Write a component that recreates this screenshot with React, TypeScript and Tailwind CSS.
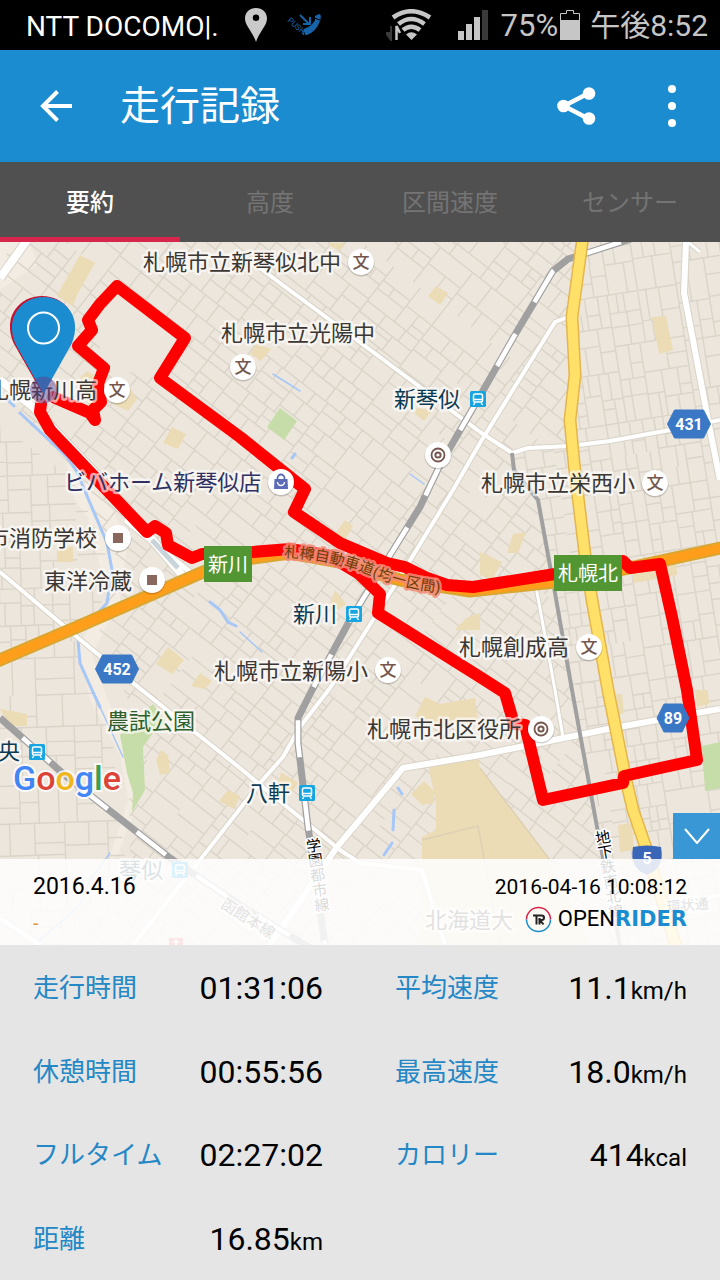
import React from "react";

const jp = "font-['Roboto','Noto_Sans_CJK_JP',sans-serif]";

type Pt = [number, number];

function rng(seed: number) {
  let s = seed;
  return () => {
    s = (s * 1664525 + 1013904223) % 4294967296;
    return s / 4294967296;
  };
}

/* Splits an area into city blocks and returns the streets between them. */
function blocks(seed: number, w: number, h: number, min: number, ratio: number): string {
  const rand = rng(seed);
  const out: string[] = [];
  const split = (x: number, y: number, bw: number, bh: number) => {
    const limit = min * (1 + rand() * 0.9);
    if (bw < limit * ratio && bh < limit) return;
    const t = 0.35 + rand() * 0.3;
    const draw = rand() > 0.07;
    if (bw / ratio > bh) {
      const m = Math.round(bw * t);
      if (draw) out.push(`M${x + m} ${y}v${bh}`);
      split(x, y, m, bh);
      split(x + m, y, bw - m, bh);
    } else {
      const m = Math.round(bh * t);
      if (draw) out.push(`M${x} ${y + m}h${bw}`);
      split(x, y, bw, m);
      split(x, y + m, bw, bh - m);
    }
  };
  split(0, 0, w, h);
  return out.join("");
}

const centreStreets = blocks(7, 1300, 1300, 16, 1.5);
const eastStreets = blocks(21, 420, 860, 21, 0.7);
const westStreets = blocks(5, 220, 560, 22, 1.1);

const sand = [
  "80,255 95,263 78,293 73,306 57,296 60,290",
  "87,371 98,377 100,400 88,405 80,378",
  "128,385 137,399 128,411 113,404",
  "172,427 186,434 178,449 163,443",
  "256,344 271,349 261,361 250,354",
  "330,243 345,243 341,250 329,246",
  "436,286 448,293 440,305 428,296",
  "417,408 432,410 424,421 415,414",
  "652,317 666,316 673,350 659,354",
  "57,547 73,547 73,562 57,562",
  "168,647 184,660 172,674 156,664",
  "200,673 212,681 205,689 191,686",
  "345,520 353,526 345,540 335,534",
  "335,590 346,604 338,610 330,604",
  "513,534 526,532 518,553 507,553",
  "480,552 502,562 492,580 480,575",
  "466,618 480,613 480,630 455,630",
  "0,709 27,714 27,726 10,726",
  "161,750 168,755 170,773 160,775 156,760",
  "228,790 240,796 234,809 219,801",
  "425,697 440,704 475,698 478,722 440,728 415,716",
  "281,772 298,783 292,792 277,786",
  "632,565 676,560 677,575 634,583",
  "695,690 708,690 709,704 697,707",
  "616,694 622,694 624,713 618,715",
  "618,825 632,823 634,850 620,852",
  "424,781 434,791 434,803 422,805 411,794",
  "428,764 478,757 480,768 550,860 590,945 422,945 422,837 436,830 436,803",
];

const whiteRoads: [string, number][] = [
  ["M30 236L0 278", 8],
  ["M260 268L280 283L330 320L357 340L420 387L480 432L512 453L528 448L570 446L610 441L670 430L720 420", 4],
  ["M700 252L688 242", 3],
  ["M568 317L555 322L480 443L453 490L400 577L330 688L300 727L283 757L260 783L200 860L133 945", 4],
  ["M686 242L684 293L693 340L710 430L720 480", 6],
  ["M0 380L33 407L100 478L182 575", 8],
  ["M125 520L190 572", 5],
  ["M0 572L77 637L133 683L240 768L270 793L340 850L360 863L422 870L445 945", 4],
  ["M270 945L337 847L403 768L480 755L613 728L720 709", 6],
  ["M536 587L555 690L563 737", 3],
  ["M0 918L40 945", 4],
  ["M640 910L720 895", 4],
];

const lightRail = "M640 236L587 253L568 259L553 271L516 333L480 396L440 465L420 507L387 560L350 620L312 690L298 718L298 743L308 827L313 860L325 945";
const southRail = "M0 718L67 777L170 858L240 905L310 948";
const subway = "M512 453L514 470L538 500L555 593L572 690L597 827L620 945";
const mainRoad = "M583 236L572 317L575 375L570 420L574 463L585 555L592 600L608 690L616 730L626 780L633 810L645 845L662 900L677 950";
const highway = "M-5 662L77 627L203 572L240 560L290 553L340 562L400 580L470 591L555 582L620 570L725 547";

const route = "M53 397L90 413L95 420L93 410L101 402L98 384L104 368L78 346L92 330L88 320L100 304L117 286L185 338L160 378L240 437L305 489L294 512L340 543L387 563L405 567L427 578L447 585L473 587L555 574L623 561L630 568L660 564L672 617L687 690L697 760L624 776L623 783L543 800L525 725L514 724L505 693L480 677L378 613L380 594L358 573L330 556L290 549L240 553L202 554L192 558L168 545L166 533L155 526L147 532L85 467L50 430L40 412L41 404";

function Label({ x, y, size = 22, fill = "#3a3734", weight = 400, children }: {
  x: number; y: number; size?: number; fill?: string; weight?: number; children: React.ReactNode;
}) {
  return (
    <text x={x} y={y} fontSize={size} fill={fill} fontWeight={weight} stroke="#fff" strokeOpacity={0.65}
      strokeWidth={5} strokeLinejoin="round" paintOrder="stroke">
      {children}
    </text>
  );
}

function Disc({ x, y, children }: { x: number; y: number; children: React.ReactNode }) {
  return (
    <g transform={`translate(${x} ${y})`}>
      <circle cy="1" r="13.5" fill="#000" opacity="0.18" />
      <circle r="13" fill="#fff" />
      {children}
    </g>
  );
}

const School = ({ x, y }: { x: number; y: number }) => (
  <Disc x={x} y={y}>
    <text y="6" fontSize="17" fontWeight="500" textAnchor="middle" fill="#76574e">文</text>
  </Disc>
);
const Office = ({ x, y }: { x: number; y: number }) => (
  <Disc x={x} y={y}>
    <circle r="6.5" fill="none" stroke="#76574e" strokeWidth="1.8" />
    <circle r="2.6" fill="none" stroke="#76574e" strokeWidth="2" />
  </Disc>
);
const Place = ({ x, y }: { x: number; y: number }) => (
  <Disc x={x} y={y}><rect x="-5" y="-5" width="10" height="10" fill="#8a675c" /></Disc>
);
const Station = ({ x, y }: { x: number; y: number }) => (
  <g transform={`translate(${x} ${y})`}>
    <rect x="-8" y="-8" width="16" height="16" rx="1.5" fill="#16a5e0" />
    <rect x="-4.5" y="-5" width="9" height="8" rx="1.5" fill="none" stroke="#fff" strokeWidth="1.5" />
    <path d="M-4 0.5H4M-3 3.5L-4.5 6M3 3.5L4.5 6" stroke="#fff" strokeWidth="1.4" />
  </g>
);
function Shield({ x, y, w, text }: { x: number; y: number; w: number; text: string }) {
  const a = w / 2;
  const pts: Pt[] = [[-a, 0], [-a + 7, -14], [a - 7, -14], [a, 0], [a - 7, 14], [-a + 7, 14]];
  return (
    <g transform={`translate(${x} ${y})`}>
      <polygon points={pts.map((p) => p.join(",")).join(" ")} fill="#3a78c6" stroke="#3a78c6" strokeLinejoin="round" />
      <text y="6" fontSize="16" fontWeight="700" textAnchor="middle" fill="#fff">{text}</text>
    </g>
  );
}
function ExitSign({ x, y, w, h, text }: { x: number; y: number; w: number; h: number; text: string }) {
  return (
    <g>
      <rect x={x} y={y} width={w} height={h} fill="#529634" />
      <text x={x + w / 2} y={y + h / 2 + 8} fontSize="20" textAnchor="middle" fill="#fff">{text}</text>
    </g>
  );
}

function RouteMap() {
  return (
    <svg viewBox="0 242 720 703" role="img" aria-label="走行ルートの地図" className={`block h-auto w-full ${jp}`}>
      <defs>
        <clipPath id="east"><path d="M580 242H720V945H620L597 827L555 593L538 500L512 453L570 446L570 315Z" /></clipPath>
        <clipPath id="west"><path d="M0 425L75 480L108 560L100 612L76 650L112 740L125 860L60 945H0Z" /></clipPath>
        <clipPath id="centre">
          <path d="M0 242H578L568 315L568 446L512 453L538 500L555 593L597 827L620 945H60L130 860L128 700L100 630L118 560L75 470L0 395Z" />
        </clipPath>
        <path id="expressway" d="M284 557Q330 559 370 575T448 593" />
      </defs>
      <rect y="242" width="720" height="703" fill="#ede6dc" />
      <path d="M30 242L37 265L0 290V242ZM66 462L75 500L88 518L108 600L78 645L90 700L120 755L128 800L112 850L95 870L118 855L138 800L130 760L108 700L92 655L120 600L128 540L110 505Z" fill="#f3ece2" />
      <g fill="none" stroke="#dad4c9" strokeWidth="1.4">
        <g clipPath="url(#centre)"><path transform="translate(330 -160) rotate(38)" d={centreStreets} /></g>
        <g clipPath="url(#east)"><path transform="translate(470 230) rotate(-9)" d={eastStreets} /></g>
        <g clipPath="url(#west)"><path transform="translate(-20 410) rotate(-2)" d={westStreets} /></g>
      </g>
      <path d="M94 322L120 292L185 338L158 378L104 366Z" fill="#ede6dc" />
      <g fill="#ebdcb6">{sand.map((p) => <polygon key={p} points={p} />)}</g>
      <path d="M422 840L478 826L500 945M480 768L550 860" fill="none" stroke="#ddd0b4" strokeWidth="1.5" />
      <path d="M153 704L140 716L120 735L127 773L133 793L132 812L145 790L143 747L153 733L166 724ZM280 408L297 421L284 440L267 427ZM702 746L720 742V788L705 791Z" fill="#c7dda9" />
      <g fill="none" stroke="#a6c7f7" strokeWidth="3" strokeLinecap="round">
        <path d="M8 400L14 406M20 413L67 457L77 472L90 503L107 543L112 570L107 603L98 613M78 640L80 663L92 690L100 707" />
        <path d="M100 707L123 757" strokeWidth="1.5" />
        <path d="M210 602L220 610L228 622L236 626M398 788L402 794M394 810L393 830M392 843L384 855M295 454L292 458" />
        <path d="M273 374L300 391M410 474L424 484M240 632L262 652M110 853L90 880L80 905L40 940" strokeWidth="1.5" />
      </g>
      <g fill="none" strokeLinejoin="round">
        {whiteRoads.map(([d, w]) => <path key={d} d={d} stroke="#d9d3c8" strokeWidth={w + 2} />)}
        {whiteRoads.map(([d, w]) => <path key={d} d={d} stroke="#fff" strokeWidth={w} />)}
        <path d="M152 540L178 568" stroke="#c9d3da" strokeWidth="5" />
        <path d={subway} stroke="#a0a0a0" strokeWidth="4" />
        <path d={southRail} stroke="#a0a0a0" strokeWidth="7" />
        <path d={southRail} stroke="#fff" strokeWidth="4.6" strokeDasharray="37 37" strokeDashoffset="-30" />
        <path d={lightRail} stroke="#a0a0a0" strokeWidth="7" />
        <path d={lightRail} stroke="#fff" strokeWidth="4.6" strokeDasharray="37 37" strokeDashoffset="-20" />
        <path d={highway} stroke="#d9a632" strokeWidth="13" />
        <path d={mainRoad} stroke="#e3b64e" strokeWidth="13" />
        <path d={mainRoad} stroke="#ffe069" strokeWidth="10" />
        <path d={highway} stroke="#ff9e1b" strokeWidth="9" />
        <path d={route} stroke="#ff0000" strokeWidth="12" strokeLinecap="round" />
      </g>

      <Label x={143} y={270}>札幌市立新琴似北中</Label>
      <Label x={221} y={341}>札幌市立光陽中</Label>
      <Label x={394} y={407} fill="#0c3b53">新琴似</Label>
      <Label x={64} y={490} fill="#2f3163">ビバホーム新琴似店</Label>
      <Label x={481} y={491}>札幌市立栄西小</Label>
      <Label x={-13} y={546}>市消防学校</Label>
      <Label x={44} y={589}>東洋冷蔵</Label>
      <Label x={293} y={622} fill="#0c3b53">新川</Label>
      <Label x={459} y={655}>札幌創成高</Label>
      <Label x={214} y={679}>札幌市立新陽小</Label>
      <Label x={107} y={729} fill="#2f5f2c">農試公園</Label>
      <Label x={367} y={737}>札幌市北区役所</Label>
      <Label x={-2} y={759} fill="#0c3b53">央</Label>
      <Label x={246} y={801} fill="#0c3b53">八軒</Label>
      <Label x={119} y={878} fill="#0c3b53">琴似</Label>
      <Label x={425} y={928}>北海道大</Label>
      <g transform="translate(223 902) rotate(32)"><Label x={0} y={6} size={15}>函館本線</Label></g>
      <g transform="translate(667 912) rotate(-5)"><Label x={0} y={0} size={14}>環状通</Label></g>
      <g transform="translate(311 838) rotate(-8)">
        <text className="[writing-mode:vertical-rl]" fontSize="15" fill="#000" stroke="#fff" strokeWidth="3" paintOrder="stroke">学園都市線</text>
      </g>
      <g transform="translate(600 830) rotate(-10)">
        <text className="[writing-mode:vertical-rl]" fontSize="15" fill="#000" stroke="#fff" strokeWidth="3" paintOrder="stroke">地下鉄南北線</text>
      </g>
      <text fontSize="15" fill="#6b3f08" stroke="#f58a78" strokeWidth="5" strokeOpacity="0.85" paintOrder="stroke" strokeLinejoin="round">
        <textPath href="#expressway">札樽自動車道(均一区間)</textPath>
      </text>

      <School x={361} y={262} /><School x={243} y={367} /><School x={117} y={390} />
      <School x={655} y={483} /><School x={589} y={647} /><School x={388} y={670} />
      <Office x={438} y={455} /><Office x={541} y={729} />
      <Place x={118} y={538} /><Place x={152} y={580} />
      <Disc x={281} y={482}>
        <path d="M-6.5 -3H6.5L7 7H-7Z" fill="#5c6bb8" />
        <path d="M-3.5 -3V-4A3.5 3.5 0 0 1 3.5 -4V-3" fill="none" stroke="#5c6bb8" strokeWidth="1.8" />
        <path d="M-3.5 0A3.5 3.5 0 0 0 3.5 0" fill="none" stroke="#fff" strokeWidth="1.4" />
      </Disc>
      <Station x={478} y={399} /><Station x={354} y={614} /><Station x={307} y={793} />
      <Station x={37} y={752} /><Station x={180} y={870} />
      <Shield x={689} y={424} w={43} text="431" />
      <Shield x={117} y={669} w={43} text="452" />
      <Shield x={673} y={718} w={32} text="89" />
      <path d="M633 847Q647 844 661 847Q665 868 647 875Q629 868 633 847Z" fill="#3a66b8" />
      <text x="647" y="864" fontSize="16" fontWeight="700" textAnchor="middle" fill="#fff">5</text>
      <path d="M169 938H183V945H169Z" fill="#e0564f" />
      <path d="M176 939V945M173 942H179" stroke="#fff" strokeWidth="1.5" />
      <ExitSign x={204} y={546} w={48} h={36} text="新川" />
      <ExitSign x={554} y={555} w={68} h={36} text="札幌北" />

      <Label x={-13} y={398}>札幌新川高</Label>
      <path d="M42 393L13.500 343C2 316 20 296 42 296C64 296 82 316 70.500 343Z" fill="#c8102e" />
      <path d="M43.500 394L15.500 344C4 317 22 297 43.500 297C65 297 83 317 71.500 344Z" fill="#1b8cd0" />
      <circle cx="43.500" cy="390" r="13.500" fill="#5b3f8c" opacity="0.5" />
      <circle cx="43.500" cy="328" r="15.500" fill="none" stroke="#fff" strokeWidth="2" />

      <text x="13" y="790" fontSize="34" fontWeight="500" stroke="#fff" strokeOpacity="0.8" strokeWidth="4" paintOrder="stroke">
        <tspan fill="#4285f4">G</tspan><tspan fill="#dc4437">o</tspan><tspan fill="#f0b71c">o</tspan><tspan fill="#4285f4">g</tspan><tspan fill="#3a9e54">l</tspan><tspan fill="#dc4437">e</tspan>
      </text>
    </svg>
  );
}

function StatusBar() {
  return (
    <div className="flex h-[50px] items-center justify-between bg-black pl-[26px] pr-3 text-[#c6c6c6]">
      <div className="flex items-center">
        <span className="pt-1 text-[28px] leading-8 text-white">NTT DOCOMO|.</span>
        <svg className="ml-[26px] h-[34px] w-[22px]" viewBox="0 0 22 34" aria-hidden="true">
          <path fillRule="evenodd" fill="#c9c9c9" d="M11 0C4.500 0 0 4.600 0 10.500C0 18 8 24 11 34C14 24 22 18 22 10.500C22 4.600 17.500 0 11 0ZM11 6.500A3.200 3.200 0 1 1 11 12.900A3.200 3.200 0 0 1 11 6.500Z" />
        </svg>
        <svg className="ml-5 h-[24px] w-[35px]" viewBox="0 0 35 24" aria-hidden="true">
          <path d="M28 3L32 1Q35 1 33 8Q29 19 20 22L16 22L15 17L19 15Q26 12 28 7Z" fill="#1763a8" />
          <path d="M15 15L18 22M27 5L33 7" stroke="#000" strokeWidth="1" />
          <path d="M13 2L22 11M23 4V11H16" fill="none" stroke="#1763a8" strokeWidth="2" />
          <text x="0" y="8" fontSize="8" fill="#1763a8" transform="rotate(42 0 8)">PUSH</text>
        </svg>
      </div>
      <div className="flex items-center">
        <svg className="h-[32px] w-[46px]" viewBox="0 0 46 32" aria-hidden="true">
          <path d="M5 17V31M0 24H5V31Z" stroke="#3a3a3a" strokeWidth="2" fill="#3a3a3a" />
          <path d="M10.500 31V17L14 24" stroke="#c6c6c6" strokeWidth="2.500" fill="none" />
          <g fill="none" stroke="#c6c6c6" strokeWidth="4.600">
            <path d="M7 8.500Q25 -4 44 8.500" /><path d="M12.500 15Q25 5 38.500 15" /><path d="M17 21Q25 14.500 34 21" />
          </g>
          <path d="M20 25.500Q25 21 31 25.500L25.500 31Z" fill="#c6c6c6" />
        </svg>
        <svg className="ml-[26px] h-[30px] w-[30px]" viewBox="0 0 30 30" aria-hidden="true">
          <path d="M0 21H6V30H0ZM8 14H14V30H8ZM16 7H22V30H16Z" fill="#c6c6c6" />
          <path d="M24 0H30V30H24Z" fill="#3a3a3a" />
        </svg>
        <span className="ml-[13px] pt-0.5 text-[31px] leading-8">75%</span>
        <svg className="ml-0.5 h-[30px] w-5" viewBox="0 0 20 30" aria-hidden="true">
          <path d="M.5 29.500V3.500H6.500V.5H13.500V3.500H19.500V29.500Z" fill="none" stroke="#c6c6c6" />
          <path d="M0 10H20V30H0Z" fill="#c6c6c6" />
        </svg>
        <span className="ml-[10px] pt-0.5 text-[30px] leading-8">午後8:52</span>
      </div>
    </div>
  );
}

const tabs = ["要約", "高度", "区間速度", "センサー"];

const stats: { label: string; value: string; unit?: string }[] = [
  { label: "走行時間", value: "01:31:06" },
  { label: "平均速度", value: "11.1", unit: "km/h" },
  { label: "休憩時間", value: "00:55:56" },
  { label: "最高速度", value: "18.0", unit: "km/h" },
  { label: "フルタイム", value: "02:27:02" },
  { label: "カロリー", value: "414", unit: "kcal" },
  { label: "距離", value: "16.85", unit: "km" },
];

export default function App() {
  return (
    <div lang="ja" className={`flex min-h-screen flex-col bg-[#e5e5e5] ${jp}`}>
      <StatusBar />
      <header className="flex h-[112px] items-center bg-[#1b8cd0] pl-9 pr-7 text-white">
        <button type="button" aria-label="戻る" className="flex h-12 w-10 items-center justify-center">
          <svg className="h-10 w-10" viewBox="0 0 40 40" fill="none" stroke="currentColor" strokeWidth="4" aria-hidden="true">
            <path d="M36 20H7M21.500 5.500L7 20L21.500 34.500" />
          </svg>
        </button>
        <h1 className="ml-11 flex-1 pt-0.5 text-[40px] leading-[48px]">走行記録</h1>
        <button type="button" aria-label="共有" className="flex h-12 w-10 items-center justify-center">
          <svg className="h-10 w-10" viewBox="0 0 40 40" aria-hidden="true">
            <path d="M33 7L8 20L33 33" fill="none" stroke="#fff" strokeWidth="4.500" />
            <g fill="#fff"><circle cx="33" cy="7.500" r="6.300" /><circle cx="7.500" cy="20" r="6.300" /><circle cx="33" cy="32.500" r="6.300" /></g>
          </svg>
        </button>
        <button type="button" aria-label="メニュー" className="ml-14 flex h-12 w-10 items-center justify-center">
          <svg className="h-[42px] w-2" viewBox="0 0 8 42" fill="#fff" aria-hidden="true">
            <circle cx="4" cy="4" r="4" /><circle cx="4" cy="21" r="4" /><circle cx="4" cy="38" r="4" />
          </svg>
        </button>
      </header>
      <nav role="tablist" className="grid h-20 grid-cols-4 bg-[#505050]">
        {tabs.map((t, i) => (
          <button
            key={t}
            type="button"
            role="tab"
            aria-selected={i === 0}
            className={
              i === 0
                ? "border-b-[5px] border-[#d8254b] pt-1.5 text-2xl font-medium text-white"
                : "border-b-[5px] border-transparent pt-1.5 text-2xl text-[#747474]"
            }
          >
            {t}
          </button>
        ))}
      </nav>

      <section className="relative">
        <RouteMap />
        <div className="absolute inset-x-0 bottom-0 flex flex-col items-end">
          <button type="button" aria-label="閉じる" className="flex h-[46px] w-[47px] items-center justify-center bg-[#3897d4]">
            <svg className="h-4 w-[26px]" viewBox="0 0 26 16" fill="none" stroke="#fff" strokeWidth="2" aria-hidden="true">
              <path d="M1 1L13 15L25 1" />
            </svg>
          </button>
          <div className="flex h-[86px] w-full justify-between bg-white/85 px-[33px] pt-3.5 text-black">
            <div className="flex flex-col">
              <p className="text-[23px] leading-7">2016.4.16</p>
              <p className="mt-1.5 text-xl leading-8 text-[#e0983a]">-</p>
            </div>
            <div className="flex flex-col items-end">
              <p className="text-[21px] leading-7">2016-04-16 10:08:12</p>
              <div className="flex items-center text-[22px] leading-9">
                <svg className="mr-1.5 h-[27px] w-[27px]" viewBox="0 0 27 27" fill="none" aria-hidden="true">
                  <path d="M1.500 13.500A12 12 0 0 1 25.500 13.500" stroke="#d8254b" strokeWidth="1.500" />
                  <path d="M25.500 13.500A12 12 0 0 1 1.500 13.500" stroke="#1b8cd0" strokeWidth="1.500" />
                  <path d="M8 9.500H16.500Q19 9.500 19 11.700Q19 14 16.500 14H15L18.500 18.500M11.500 9.500V18.500M14.500 12V18.500" stroke="#222" strokeWidth="2" />
                </svg>
                <span>OPEN</span>
                <span className="font-['DejaVu_Sans',sans-serif] text-[21px] font-bold text-[#1b8cd0]">RIDER</span>
              </div>
            </div>
          </div>
        </div>
      </section>

      <dl className="grid flex-1 auto-rows-fr grid-cols-2">
        {stats.map((s) => (
          <div key={s.label} className="flex items-center justify-between py-4 pl-[33px] pr-[37px] even:pl-[35px] even:pr-[33px]">
            <dt className="pt-0.5 text-[26px] leading-10 text-[#2487c6]">{s.label}</dt>
            <dd className="pt-0.5 text-[32px] leading-10 text-black">
              {s.value}
              {s.unit && <span className="text-2xl">{s.unit}</span>}
            </dd>
          </div>
        ))}
      </dl>
    </div>
  );
}
